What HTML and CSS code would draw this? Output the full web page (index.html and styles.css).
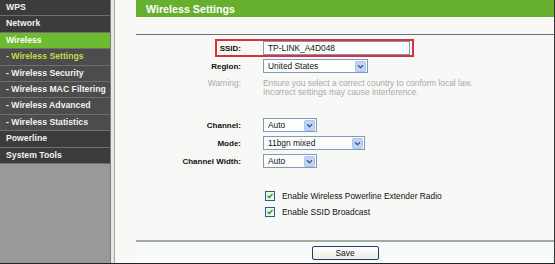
FILE: index.html
```html
<!DOCTYPE html>
<html>
<head>
  <title>Wireless Settings</title>
  <meta name="viewport" content="width=device-width, initial-scale=1">
  <link rel="stylesheet" href="styles.css">
</head>
<body>
  <div class="page">
    <ul class="menu">
      <li class="item">WPS</li>
      <li class="item">Network</li>
      <li class="item active">Wireless</li>
      <li class="sub current">- Wireless Settings</li>
      <li class="sub">- Wireless Security</li>
      <li class="sub">- Wireless MAC Filtering</li>
      <li class="sub">- Wireless Advanced</li>
      <li class="sub">- Wireless Statistics</li>
      <li class="item">Powerline</li>
      <li class="item">System Tools</li>
    </ul>
    <div class="divider"></div>

    <div class="main">
      <div class="title">Wireless Settings</div>
      <div class="rule"></div>

      <div class="form">
        <div class="ssid-row">
          <span class="ssid-label">SSID:</span>
          <div class="textbox">TP-LINK_A4D048</div>
        </div>
        <div class="row">
          <span class="label">Region:</span>
          <div class="select region">
            <span class="value">United States</span>
            <span class="arrow"><svg width="11" height="11" viewBox="0 0 11 11"><rect x="0.5" y="0.5" width="10" height="10" rx="1" fill="#c3d4fb" stroke="#adc2ef"/><path d="M3 4.2 L5.5 6.7 L8 4.2" fill="none" stroke="#4d6185" stroke-width="1.6"/></svg></span>
          </div>
        </div>
        <div class="row warning">
          <span class="label muted">Warning:</span>
          <div class="note">Ensure you select a correct country to conform local law.<br>Incorrect settings may cause interference.</div>
        </div>

        <div class="row channel">
          <span class="label">Channel:</span>
          <div class="select small">
            <span class="value">Auto</span>
            <span class="arrow"><svg width="11" height="11" viewBox="0 0 11 11"><rect x="0.5" y="0.5" width="10" height="10" rx="1" fill="#c3d4fb" stroke="#adc2ef"/><path d="M3 4.2 L5.5 6.7 L8 4.2" fill="none" stroke="#4d6185" stroke-width="1.6"/></svg></span>
          </div>
        </div>
        <div class="row">
          <span class="label">Mode:</span>
          <div class="select mode">
            <span class="value">11bgn mixed</span>
            <span class="arrow"><svg width="11" height="11" viewBox="0 0 11 11"><rect x="0.5" y="0.5" width="10" height="10" rx="1" fill="#c3d4fb" stroke="#adc2ef"/><path d="M3 4.2 L5.5 6.7 L8 4.2" fill="none" stroke="#4d6185" stroke-width="1.6"/></svg></span>
          </div>
        </div>
        <div class="row">
          <span class="label">Channel Width:</span>
          <div class="select small">
            <span class="value">Auto</span>
            <span class="arrow"><svg width="11" height="11" viewBox="0 0 11 11"><rect x="0.5" y="0.5" width="10" height="10" rx="1" fill="#c3d4fb" stroke="#adc2ef"/><path d="M3 4.2 L5.5 6.7 L8 4.2" fill="none" stroke="#4d6185" stroke-width="1.6"/></svg></span>
          </div>
        </div>

        <div class="check-row first">
          <span class="checkbox"><svg width="10" height="10" viewBox="0 0 10 10"><rect x="0.5" y="0.5" width="9" height="9" fill="#eef3f0" stroke="#2a5a86"/><path d="M2.5 4.8 L4.2 6.5 L7.5 3" fill="none" stroke="#21a121" stroke-width="1.5"/></svg></span>
          <span>Enable Wireless Powerline Extender Radio</span>
        </div>
        <div class="check-row">
          <span class="checkbox"><svg width="10" height="10" viewBox="0 0 10 10"><rect x="0.5" y="0.5" width="9" height="9" fill="#eef3f0" stroke="#2a5a86"/><path d="M2.5 4.8 L4.2 6.5 L7.5 3" fill="none" stroke="#21a121" stroke-width="1.5"/></svg></span>
          <span>Enable SSID Broadcast</span>
        </div>
      </div>

      <div class="rule bottom"></div>
      <div class="actions">
        <button class="save">Save</button>
      </div>
    </div>
  </div>
</body>
</html>
```

FILE: styles.css
```css
body {
  margin: 0;
  font-family: "Liberation Sans", Arial, sans-serif;
  font-size: 8.4px;
  color: #111;
  background-color: #f8f8f6;
}
.page {
  display: flex;
  height: 264px;
  border-bottom: 1px solid #222;
  box-sizing: border-box;
}
.menu {
  list-style: none;
  margin: 0;
  padding: 0;
  width: 110px;
  background-color: #999999;
  border-right: 1px solid #7c7c7c;
}
.menu li {
  height: 15.4px;
  line-height: 15.4px;
  padding-left: 6px;
  border-bottom: 1px solid #6f6f6f;
  font-size: 8.7px;
  font-weight: bold;
  color: #f2f2f2;
  white-space: nowrap;
}
.menu .item {
  background-color: #3b3b3b;
}
.menu .sub {
  background-color: #4c4c4c;
}
.menu .active {
  background-color: #6cbb31;
  color: #ffffff;
}
.menu .current {
  color: #c6da4a;
}
.divider {
  width: 3px;
  background-color: #e9e9e2;
  border-right: 1px solid #a9a9a2;
}
.main {
  flex: 1;
  padding-left: 21px;
  border-right: 1px solid #333;
  display: flex;
  flex-direction: column;
}
.title {
  height: 17px;
  line-height: 18px;
  padding-left: 10px;
  background-color: #67b02f;
  color: #ffffff;
  font-size: 10.7px;
  font-weight: bold;
}
.rule {
  height: 1px;
  margin-top: 17px;
  background-color: #6e6e6e;
}
.form {
  padding-top: 4px;
}
.row {
  display: flex;
  align-items: center;
  height: 18px;
}
.label {
  width: 105px;
  text-align: right;
  font-size: 8px;
  font-weight: bold;
  margin-right: 22px;
  flex-shrink: 0;
}
.label.muted {
  color: #a9a9a9;
  font-weight: normal;
  font-size: 8.4px;
}
.ssid-row {
  display: flex;
  align-items: center;
  box-sizing: border-box;
  margin-left: 79px;
  width: 199px;
  height: 18px;
  border: 2px solid #d7323e;
}
.ssid-label {
  width: 24px;
  text-align: right;
  font-size: 8px;
  font-weight: bold;
  margin-right: 22px;
}
.textbox {
  box-sizing: border-box;
  width: 147px;
  height: 14px;
  line-height: 12px;
  padding-left: 4px;
  border: 1px solid #7f9db9;
  background-color: #ffffff;
}
.select {
  box-sizing: border-box;
  display: flex;
  align-items: center;
  justify-content: space-between;
  height: 14px;
  padding: 0 1px 0 4px;
  border: 1px solid #7f9db9;
  background-color: #ffffff;
}
.select .arrow {
  display: flex;
}
.region {
  width: 105px;
}
.mode {
  width: 102px;
}
.small {
  width: 54px;
}
.warning {
  height: auto;
  align-items: flex-start;
  padding-top: 4px;
  line-height: 9px;
}
.note {
  color: #a9a9a9;
}
.channel {
  margin-top: 19px;
}
.check-row {
  display: flex;
  align-items: center;
  height: 16px;
  padding-left: 129px;
}
.check-row.first {
  margin-top: 18px;
}
.checkbox {
  display: flex;
  margin-right: 7px;
}
.rule.bottom {
  height: 2px;
  margin-top: 20px;
  background-color: #a4aaa4;
}
.actions {
  flex: 1;
  display: flex;
  justify-content: center;
  align-items: center;
  background-color: #f6fbfa;
}
.save {
  width: 67px;
  height: 14px;
  padding: 0;
  font-family: "Liberation Sans", Arial, sans-serif;
  font-size: 8.4px;
  color: #111;
  border: 1px solid #1f3f6f;
  border-radius: 2px;
  background: linear-gradient(#ffffff, #ecebe4);
}
```
